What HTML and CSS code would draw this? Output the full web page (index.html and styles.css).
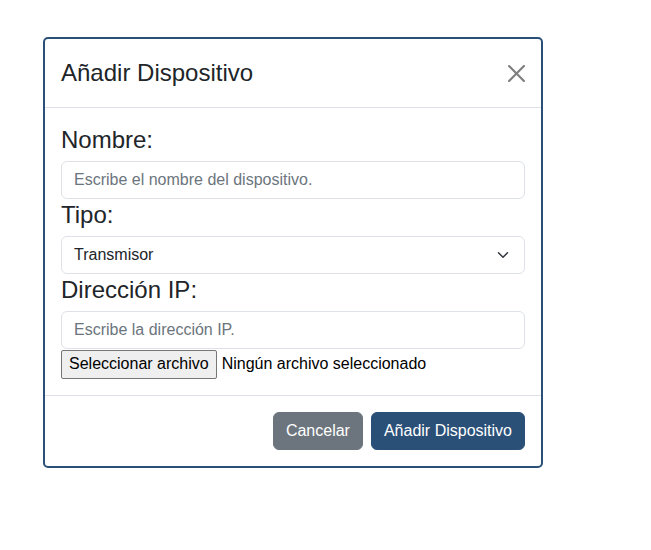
FILE: index.html
```html
<!DOCTYPE html>
<html lang="es">
<head>
<meta charset="utf-8">
<title>Añadir Dispositivo</title>
<link rel="stylesheet" href="styles.css">
</head>
<body>
<div class="modal">
  <div class="modal-header">
    <h4 class="modal-title">Añadir Dispositivo</h4>
    <button class="btn-close" type="button" aria-label="Cerrar">
      <svg viewBox="0 0 16 16" width="17" height="17"><path fill="#000" d="M.293.293a1 1 0 0 1 1.414 0L8 6.586 14.293.293a1 1 0 1 1 1.414 1.414L9.414 8l6.293 6.293a1 1 0 0 1-1.414 1.414L8 9.414l-6.293 6.293a1 1 0 0 1-1.414-1.414L6.586 8 .293 1.707a1 1 0 0 1 0-1.414z"/></svg>
    </button>
  </div>
  <div class="modal-body">
    <label class="form-label" for="nombre">Nombre:</label>
    <input class="form-control" id="nombre" type="text" placeholder="Escribe el nombre del dispositivo.">
    <label class="form-label" for="tipo">Tipo:</label>
    <div class="form-select" id="tipo">
      <span>Transmisor</span>
      <svg class="chev" viewBox="0 0 16 16" width="16" height="12"><path fill="none" stroke="#343a40" stroke-linecap="round" stroke-linejoin="round" stroke-width="2" d="m2 5 6 6 6-6"/></svg>
    </div>
    <label class="form-label" for="ip">Dirección IP:</label>
    <input class="form-control" id="ip" type="text" placeholder="Escribe la dirección IP.">
    <div class="file-row">
      <button class="file-btn" type="button">Seleccionar archivo</button>
      <span class="file-name">Ningún archivo seleccionado</span>
    </div>
  </div>
  <div class="modal-footer">
    <button class="btn btn-secondary" type="button">Cancelar</button>
    <button class="btn btn-primary" type="button">Añadir Dispositivo</button>
  </div>
</div>
</body>
</html>
```
FILE: styles.css
```css
* { box-sizing: border-box; }
html, body { margin: 0; padding: 0; background: #fff; }
body {
  font-family: "Liberation Sans", Arial, sans-serif;
  font-size: 16px;
  line-height: 1.5;
  color: #212529;
  padding: 37px 0 0 43px;
}
.modal {
  width: 500px;
  border: 2px solid #2a5078;
  border-radius: 5px;
  background: #fff;
  display: flex;
  flex-direction: column;
}
.modal-header {
  display: flex;
  align-items: center;
  justify-content: space-between;
  padding: 16px;
  height: 69px;
  border-bottom: 1px solid #dee2e6;
}
.modal-title {
  margin: 0;
  font-size: 24px;
  font-weight: 400;
  line-height: 36px;
}
.btn-close {
  border: 0;
  background: transparent;
  padding: 0;
  width: 17px;
  height: 17px;
  opacity: .5;
  display: flex;
  margin-top: 1px;
}
.modal-body {
  padding: 16px;
  display: flex;
  flex-direction: column;
}
.form-label {
  font-size: 24px;
  line-height: 32px;
  margin-bottom: 5px;
}
.form-control, .form-select {
  width: 100%;
  height: 38px;
  font: inherit;
  color: #212529;
  padding: 6px 12px;
  border: 1px solid #dee2e6;
  border-radius: 6px;
  background: #fff;
}
.form-control::placeholder { color: #6c757d; opacity: 1; }
.form-select {
  display: flex;
  align-items: center;
  justify-content: space-between;
  padding-right: 13px;
}
.chev { display: block; }
.file-row {
  display: flex;
  align-items: center;
  height: 30px;
}
.file-btn {
  font: inherit;
  color: #000;
  height: 29px;
  padding: 1px 7px;
  background: #efefef;
  border: 1px solid #767676;
  border-radius: 2px;
  margin-right: 5px;
}
.file-name { color: #000; }
.modal-footer {
  display: flex;
  justify-content: flex-end;
  gap: 8px;
  padding: 16px;
  border-top: 1px solid #dee2e6;
}
.btn {
  font: inherit;
  height: 38px;
  padding: 6px 12px;
  border: 1px solid transparent;
  border-radius: 6px;
  color: #fff;
}
.btn-secondary { background: #6c757d; border-color: #6c757d; }
.btn-primary { background: #2a5078; border-color: #2a5078; }
```
